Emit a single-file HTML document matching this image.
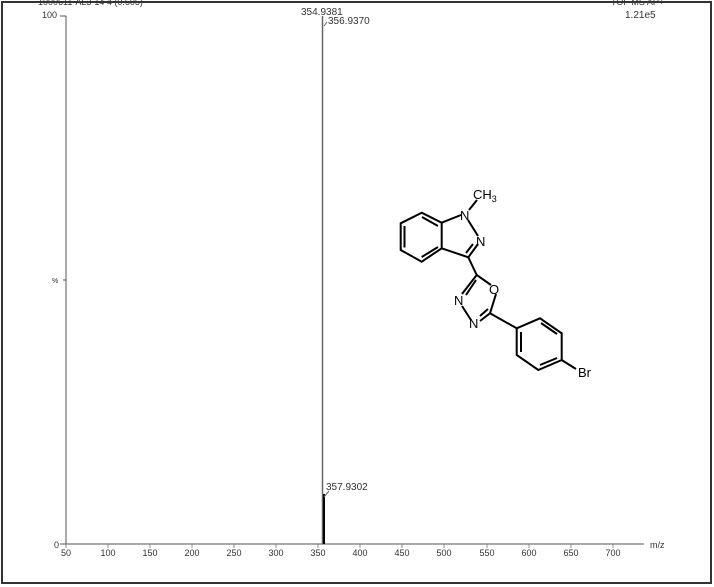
<!DOCTYPE html><html><head><style>body{margin:0;background:#fff}svg{display:block}text{font-family:"Liberation Sans",sans-serif;fill:#333}</style></head><body>
<svg width="714" height="587" viewBox="0 0 714 587">
<rect x="2" y="2" width="709" height="581" fill="none" stroke="#333" stroke-width="2"/>
<text x="38" y="5" font-size="9">1000611-AL3-14 4 (0.605)</text>
<text x="611" y="5" font-size="9">TOF MS AP+</text>
<text x="625" y="18" font-size="10">1.21e5</text>
<text x="42" y="18" font-size="9">100</text>
<line x1="60" y1="16" x2="66" y2="16" stroke="#555"/>
<line x1="66" y1="16" x2="66" y2="544" stroke="#555"/>
<line x1="63" y1="280" x2="66" y2="280" stroke="#555"/>
<text x="52" y="283" font-size="7">%</text>
<text x="54" y="548" font-size="9">0</text>
<line x1="60" y1="544" x2="644" y2="544" stroke="#555"/>
<g stroke="#777" stroke-width="0.8">
<path d="M66 544v4M108 544v4M150 544v4M192 544v4M234 544v4M276 544v4M318 544v4M360 544v4M402 544v4M444 544v4M487 544v4M529 544v4M571 544v4M613 544v4"/>
</g>
<g font-size="9" text-anchor="middle">
<text x="66" y="556">50</text><text x="108" y="556">100</text><text x="150" y="556">150</text><text x="192" y="556">200</text><text x="234" y="556">250</text><text x="276" y="556">300</text><text x="318" y="556">350</text><text x="360" y="556">400</text><text x="402" y="556">450</text><text x="444" y="556">500</text><text x="487" y="556">550</text><text x="529" y="556">600</text><text x="571" y="556">650</text><text x="613" y="556">700</text>
</g>
<text x="650" y="548" font-size="9">m/z</text>
<line x1="322.5" y1="16" x2="322.5" y2="544" stroke="#666" stroke-width="1.5"/>
<rect x="323" y="494" width="2" height="50" fill="#000"/>
<path d="M324 26 L327 22" stroke="#666" fill="none"/>
<path d="M324 497 L329 491" stroke="#666" fill="none"/>
<text x="301" y="15" font-size="10">354.9381</text>
<text x="328" y="24" font-size="10">356.9370</text>
<text x="326" y="490" font-size="10">357.9302</text>
<g stroke="#000" stroke-width="2" fill="none">
<path d="M421.7 212.7 L441.7 222.7 L441.7 248.3 L421.7 261.7 L400.7 250 L400.7 223.3 Z"/>
<path d="M404.5 226 L404.5 247.5 M421.7 257 L438 247 M422 217 L438 226"/>
<path d="M441.7 222.7 L461 215 M468 220 L478 236 M478 244 L468.3 257.3 L441.7 248.3"/>
<path d="M473 244 L466 253"/>
<path d="M469 210 L477 200"/>
<path d="M468.3 257.3 L476.7 275 L491 285 M496 294 L490 313.3 L480 321 M471 320 L462 306 M462 294 L476.7 275"/>
<path d="M466 295 L476 280 M488 309 L480 316"/>
<path d="M490 313.3 L516.7 328.3"/>
<path d="M516.7 328.3 L540 318.3 L561.7 333.3 L561.7 360 L538.3 370 L516.7 355 Z"/>
<path d="M521 332 L521 352 M541 323 L557 334 M540 365 L557 358"/>
<path d="M561.7 360 L576 369"/>
</g>
<g font-size="13" style="fill:#000">
<text x="460" y="220" style="fill:#000">N</text>
<text x="476" y="246" style="fill:#000">N</text>
<text x="489" y="294" style="fill:#000">O</text>
<text x="454" y="305" style="fill:#000">N</text>
<text x="469" y="328" style="fill:#000">N</text>
<text x="578" y="377" style="fill:#000">Br</text>
<text x="473" y="199" style="fill:#000">CH<tspan font-size="9" dy="3">3</tspan></text>
</g>
</svg></body></html>
